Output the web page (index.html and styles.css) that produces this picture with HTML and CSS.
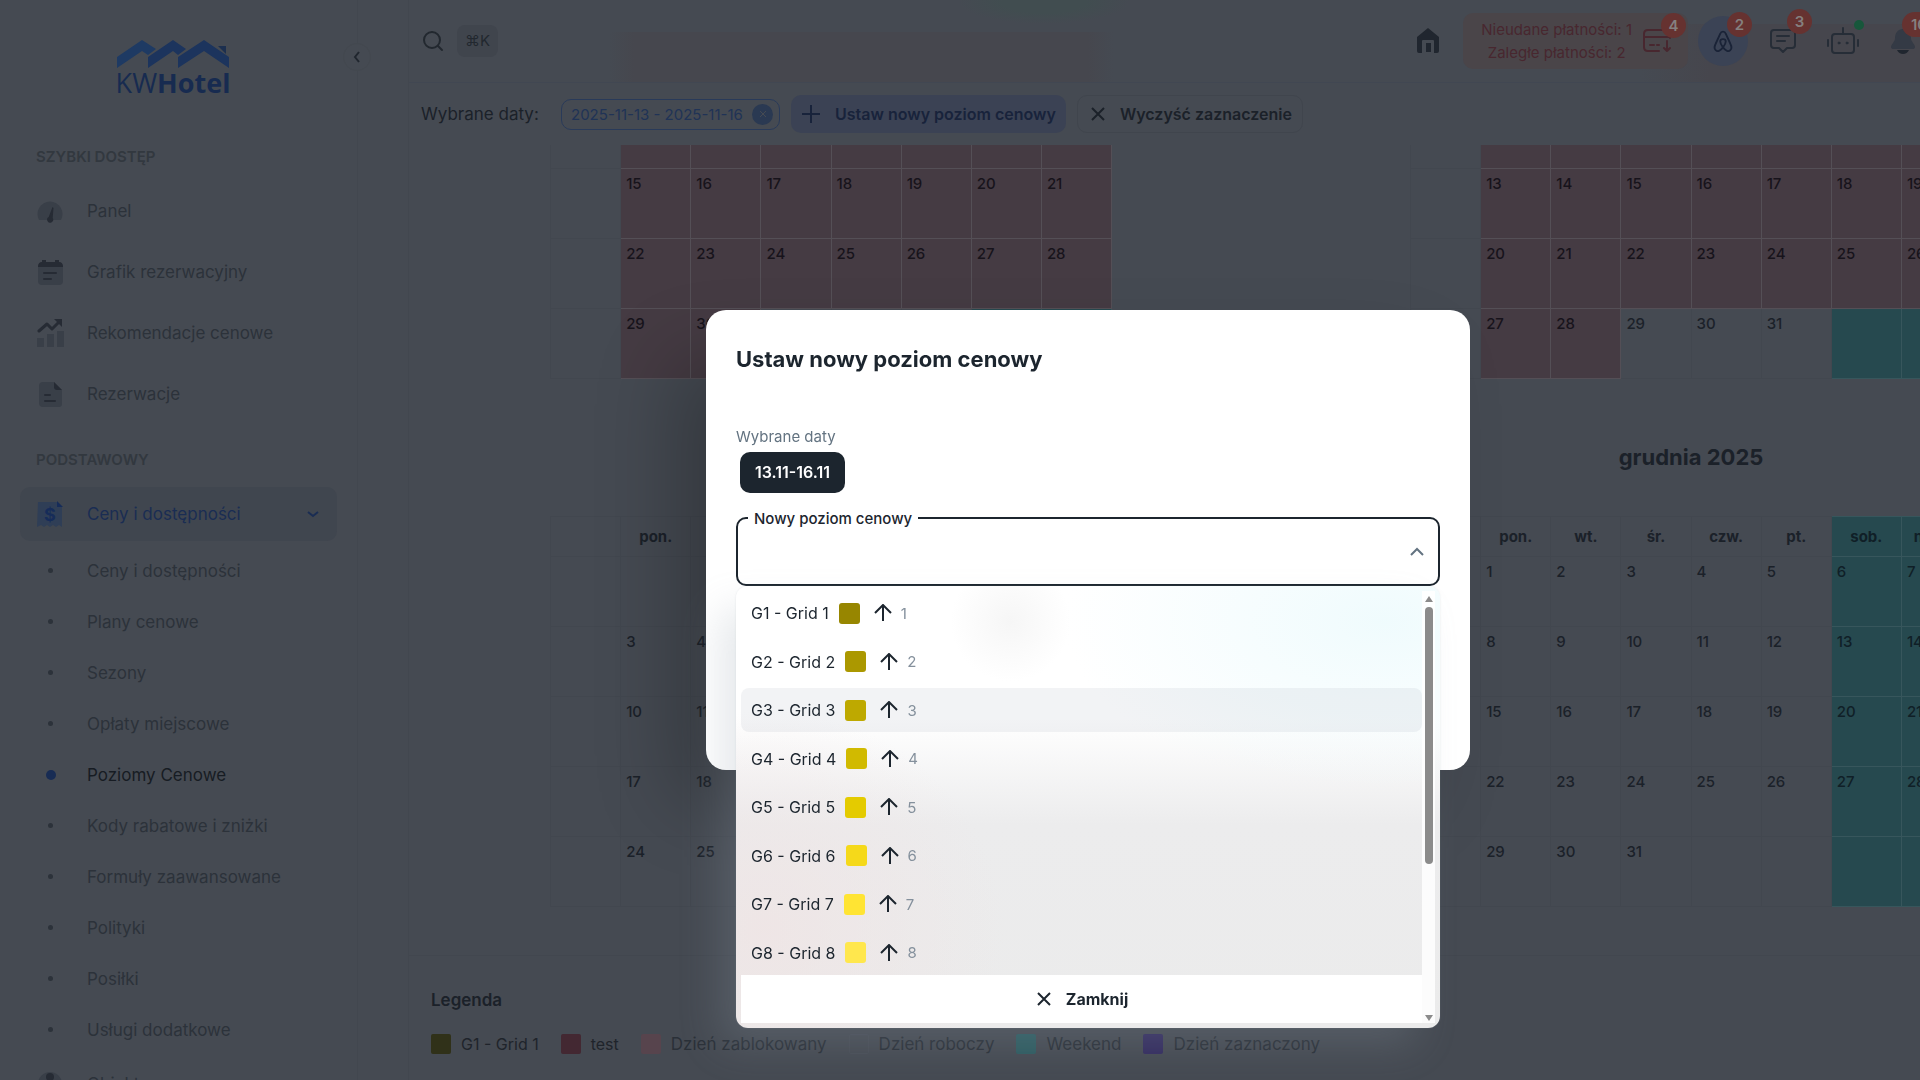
FILE: index.html
```html
<!DOCTYPE html>
<html lang="pl">
<head>
  <meta charset="UTF-8" />
  <meta name="viewport" content="width=device-width, initial-scale=1.0" />
  <title>KWHotel - Poziomy Cenowe</title>
  <link rel="stylesheet" href="styles.css">
</head>
<body>
  <div class="app">
    <aside class="sidebar">
      <a class="logo" href="#" aria-label="KWHotel">
        <svg width="112" height="29" viewBox="0 0 112 29">
          <path d="M0 28V17L25 0l14 9-8 6-6-4z" fill="#1e3a63"/>
          <path d="M31 28V17L56 0l13 9-8 6-5-4z" fill="#1c345d"/>
          <path d="M61 28V17L87 0l25 17v11L87 11z" fill="#1c345d"/>
          <path d="M101 6h8v8z" fill="#1c2f4f"/>
        </svg>
        <span class="logo-text">KW<b>Hotel</b></span>
      </a>
      <button class="collapse" aria-label="Zwiń menu">
        <svg width="16" height="16" viewBox="0 0 16 16" fill="none" stroke="currentColor" stroke-width="2"><path d="M10 3L6 8l4 5"/></svg>
      </button>

      <nav>
        <h2 class="nav-head">SZYBKI DOSTĘP</h2>
        <a class="nav-item" href="#">
          <svg class="nav-icon" viewBox="0 0 28 28"><path d="M3 23a12.500 12.500 0 1 1 22 0z" fill="#393f48"/><path d="M16.500 10l1 1-.8 10a3 3 0 1 1-4-1z" fill="#262b34"/></svg>
          Panel
        </a>
        <a class="nav-item" href="#">
          <svg class="nav-icon" viewBox="0 0 28 28"><rect x="2" y="5" width="25" height="22" rx="4" fill="#393f48"/><path d="M2 9q0-5 4-5V2h4v2h9V2h4v2q4 0 4 5z" fill="#262b34"/><path d="M8 15h12M8 21h7" stroke="#262b34" stroke-width="2" stroke-linecap="round"/></svg>
          Grafik rezerwacyjny
        </a>
        <a class="nav-item" href="#">
          <svg class="nav-icon" viewBox="0 0 28 28"><path d="M1 19h7v9H1zM11 15h7v13h-7zM21 12h7v16h-7z" fill="#393f48"/><path d="M3 12l8-7 5 5 8-8" fill="none" stroke="#262b34" stroke-width="3" stroke-linecap="round" stroke-linejoin="round"/><path d="M18 0h8v8z" fill="#262b34"/></svg>
          Rekomendacje cenowe
        </a>
        <a class="nav-item" href="#">
          <svg class="nav-icon" viewBox="0 0 28 28"><path d="M7 2h11l8 8v14q0 3-3 3H7q-4 0-4-4V6q0-4 4-4z" fill="#393f48"/><path d="M18 2l8 8h-5q-3 0-3-3z" fill="#262b34"/><path d="M9 15h5M9 21h10" stroke="#262b34" stroke-width="2" stroke-linecap="round"/></svg>
          Rezerwacje
        </a>

        <h2 class="nav-head nav-head-next">PODSTAWOWY</h2>
        <a class="nav-item active" href="#">
          <svg class="nav-icon" viewBox="0 0 28 28"><path d="M2 2h19l5 5v20l-3-2-3 2-3-2-3 2-3-2-3 2-3-2-4 2z" fill="#2f3e56"/><path d="M21 1l6 6h-6z" fill="#162c59"/><text x="14" y="21" text-anchor="middle" class="dollar">$</text></svg>
          Ceny i dostępności
          <svg class="nav-caret" width="16" height="16" viewBox="0 0 16 16" fill="none" stroke="currentColor" stroke-width="2"><path d="M3 6l5 4 5-4"/></svg>
        </a>
        <ul class="subnav">
          <li><a href="#">Ceny i dostępności</a></li>
          <li><a href="#">Plany cenowe</a></li>
          <li><a href="#">Sezony</a></li>
          <li><a href="#">Opłaty miejscowe</a></li>
          <li><a href="#" class="current">Poziomy Cenowe</a></li>
          <li><a href="#">Kody rabatowe i zniżki</a></li>
          <li><a href="#">Formuły zaawansowane</a></li>
          <li><a href="#">Polityki</a></li>
          <li><a href="#">Posiłki</a></li>
          <li><a href="#">Usługi dodatkowe</a></li>
        </ul>
        <a class="nav-item" href="#">
          <svg class="nav-icon" viewBox="0 0 28 28"><circle cx="14" cy="14" r="12" fill="#393f48"/><circle cx="14" cy="7" r="4" fill="#262b34"/></svg>
          Obiekt
        </a>
      </nav>
    </aside>

    <main class="main">
      <header class="topbar">
        <button class="search" aria-label="Szukaj">
          <svg width="24" height="24" viewBox="0 0 24 24" fill="none" stroke="currentColor" stroke-width="2" stroke-linecap="round"><circle cx="11" cy="11" r="8"/><path d="M17 17l4 4"/></svg>
          <kbd>⌘K</kbd>
        </button>
        <div class="top-actions">
          <button class="top-btn" aria-label="Start">
            <svg width="28" height="28" viewBox="0 0 28 28"><path d="M14 1L25 10v14q0 2-2 2h-3V14q0-1-1-1H9q-1 0-1 1v12H5q-2 0-2-2V10z" fill="#20262f"/><path d="M12 16h5v9h-5z" fill="#20262f"/></svg>
          </button>
          <button class="payments">
            <span>Nieudane płatności: 1<br>Zaległe płatności: 2</span>
            <svg width="30" height="28" viewBox="0 0 30 28" fill="none" stroke="currentColor" stroke-width="2" stroke-linecap="round" stroke-linejoin="round"><path d="M17 24H6q-4 0-4-4V7q0-4 4-4h18q4 0 4 4v4M2 10h26M8 18h4M15 18h2M25 14v10M22 21l3 3 3-3"/></svg>
            <i class="badge">4</i>
          </button>
          <button class="top-btn round" aria-label="Airbnb">
            <svg width="22" height="24" viewBox="0 0 24 26" fill="none" stroke="currentColor" stroke-width="2"><path d="M12 20C8 15 8 11 12 11s4 4 0 9c-3 4-6 5-8 3s-1-5 0-7l5-11c1-3 5-3 6 0l5 11c1 2 2 5 0 7s-5 1-8-3z"/></svg>
            <i class="badge">2</i>
          </button>
          <button class="top-btn" aria-label="Wiadomości">
            <svg width="28" height="28" viewBox="0 0 28 28" fill="none" stroke="currentColor" stroke-width="2" stroke-linecap="round" stroke-linejoin="round"><path d="M5 3h18q3 0 3 3v12q0 3-3 3h-5l-4 4-4-4H5q-3 0-3-3V6q0-3 3-3zM8 9h12M8 14h8"/></svg>
            <i class="badge high">3</i>
          </button>
          <button class="top-btn" aria-label="Asystent">
            <svg width="32" height="30" viewBox="0 0 32 30" fill="none" stroke="currentColor" stroke-width="2" stroke-linecap="round"><rect x="5" y="8" width="22" height="19" rx="3"/><path d="M16 8V2M1 14v6M31 14v6"/><circle cx="12" cy="17" r="1" fill="currentColor" stroke-width="1"/><circle cx="20" cy="17" r="1" fill="currentColor" stroke-width="1"/></svg>
            <i class="dot"></i>
          </button>
          <button class="top-btn" aria-label="Powiadomienia">
            <svg width="28" height="28" viewBox="0 0 28 28"><path d="M14 2c5 0 8 4 8 9 0 4 4 6 4 9q0 2-3 2H5q-3 0-3-2c0-3 4-5 4-9 0-5 3-9 8-9z" fill="#343a45"/><path d="M8 23h12q-2 4-6 4t-6-4z" fill="#20262f"/></svg>
            <i class="badge wide">10</i>
          </button>
        </div>
      </header>

      <section class="toolbar">
        <span class="toolbar-label">Wybrane daty:</span>
        <span class="date-chip">2025-11-13 - 2025-11-16
          <button aria-label="Usuń daty"><svg width="10" height="10" viewBox="0 0 10 10" stroke="#454a52" stroke-width="1"><path d="M2 2l6 6M8 2l-6 6"/></svg></button>
        </span>
        <button class="btn btn-primary">
          <svg width="20" height="20" viewBox="0 0 20 20" stroke="currentColor" stroke-width="2"><path d="M10 1v18M1 10h18"/></svg>
          Ustaw nowy poziom cenowy
        </button>
        <button class="btn btn-outline">
          <svg width="20" height="20" viewBox="0 0 20 20" stroke="currentColor" stroke-width="2"><path d="M4 4l12 12M16 4L4 16"/></svg>
          Wyczyść zaznaczenie
        </button>
      </section>

      <section class="calendar">
        <div class="months" id="months"></div>
      </section>

      <section class="legend">
        <h2>Legenda</h2>
        <ul>
          <li class="strong"><i class="sw sw-g1"></i>G1 - Grid 1</li>
          <li class="strong"><i class="sw sw-test"></i>test</li>
          <li><i class="sw sw-blocked"></i>Dzień zablokowany</li>
          <li><i class="sw sw-work"></i>Dzień roboczy</li>
          <li><i class="sw sw-weekend"></i>Weekend</li>
          <li><i class="sw sw-selected"></i>Dzień zaznaczony</li>
        </ul>
      </section>
    </main>
  </div>

  <div class="overlay">
    <div class="dialog" role="dialog" aria-labelledby="dialogTitle">
      <h1 id="dialogTitle">Ustaw nowy poziom cenowy</h1>
      <p class="caption">Wybrane daty</p>
      <span class="range">13.11-16.11</span>
      <div class="field">
        <label for="level">Nowy poziom cenowy</label>
        <select id="level"><option value=""></option></select>
        <svg class="field-caret" width="16" height="16" viewBox="0 0 16 16" fill="none" stroke="currentColor" stroke-width="2"><path d="M2 11l6-6 6 6"/></svg>
        <div class="menu">
          <div class="menu-body">
            <ul class="levels" id="levels" role="listbox" aria-label="Nowy poziom cenowy"></ul>
            <button class="close">
              <svg width="18" height="18" viewBox="0 0 18 18" stroke="currentColor" stroke-width="2"><path d="M3 3l12 12M15 3L3 15"/></svg>
              Zamknij
            </button>
          </div>
          <div class="scroll">
            <span class="arrow up"></span>
            <span class="thumb"></span>
            <span class="arrow down"></span>
          </div>
        </div>
      </div>
    </div>
  </div>

  <script>
    const dayNames = ["pon.", "wt.", "śr.", "czw.", "pt.", "sob.", "niedz."];

    // first = weekday of the 1st (0 = Monday), blockedTo = last blocked day
    const months = [
      { name: "września 2025", first: 0, days: 30, blockedTo: 30 },
      { name: "października 2025", first: 2, days: 31, blockedTo: 28 },
      { name: "listopada 2025", first: 5, days: 30, blockedTo: 0 },
      { name: "grudnia 2025", first: 0, days: 31, blockedTo: 0 }
    ];

    function renderMonth(m) {
      let rows = "";
      for (let w = 0; w < 5; w++) {
        rows += "<tr><td></td>";
        for (let d = 0; d < 7; d++) {
          const day = w * 7 + d - m.first + 1;
          const inMonth = day > 0 && day <= m.days;
          const blocked = inMonth && day <= m.blockedTo;
          const cls = blocked ? "blocked" : d > 4 ? "weekend" : "";
          rows += `<td class="${cls}">${inMonth ? day : ""}</td>`;
        }
        rows += "</tr>";
      }
      const head = dayNames.map((n, i) => `<th class="${i > 4 ? 'weekend' : ''}">${n}</th>`).join("");
      return `<div class="month"><h2>${m.name}</h2><table><thead><tr><th></th>${head}</tr></thead><tbody>${rows}</tbody></table></div>`;
    }

    document.getElementById("months").innerHTML = months.map(renderMonth).join("");

    const colors = ["#978600", "#ab9800", "#bea900", "#d1ba00", "#e4cb00", "#f5d91a", "#ffe433", "#ffe74d"];
    document.getElementById("levels").innerHTML = colors.map((c, i) => `
      <li role="option" class="${i === 2 ? 'hover' : ''}">
        G${i + 1} - Grid ${i + 1}
        <i class="level-color" style="background:${c}"></i>
        <svg width="18" height="18" viewBox="0 0 18 18" fill="none" stroke="currentColor" stroke-width="2"><path d="M9 17V2M1 9l8-8 8 8"/></svg>
        <small>${i + 1}</small>
      </li>`).join("");
  </script>
</body>
</html>
```

FILE: styles.css
```css
* {
  box-sizing: border-box;
}
body {
  margin: 0;
  height: 100vh;
  overflow: hidden;
  background: #454a52;
  color: #1b2129;
  font-family: Inter, "Liberation Sans", sans-serif;
  font-size: 17px;
}
button, select {
  font: inherit;
  color: inherit;
  border: 0;
  padding: 0;
  background: none;
}
a {
  color: inherit;
  text-decoration: none;
}
ul {
  list-style: none;
  margin: 0;
  padding: 0;
}
i {
  font-style: normal;
}
.app {
  display: flex;
  height: 100vh;
}

/* sidebar */
.sidebar {
  position: relative;
  flex: 0 0 358px;
  padding: 0 20px;
  border-right: 1px solid #42474f;
  color: #2c323a;
}
.logo {
  display: flex;
  flex-direction: column;
  align-items: center;
  height: 130px;
  padding: 40px 11px 0 0;
}
.logo-text {
  font-family: "Open Sans", sans-serif;
  font-size: 27px;
  line-height: 28px;
  color: #172b50;
}
.collapse {
  position: absolute;
  top: 43px;
  right: -14px;
  width: 28px;
  height: 28px;
  border: 1px solid #43484f;
  border-radius: 50%;
  color: #20262e;
  background: #454a52;
}
.collapse svg {
  display: block;
  margin: auto;
}
.nav-head {
  margin: 0;
  padding-left: 16px;
  font-size: 15px;
  font-weight: 600;
  line-height: 54px;
  color: #32383f;
}
.nav-head-next {
  margin-top: 12px;
}
.nav-item {
  display: flex;
  align-items: center;
  height: 54px;
  margin-bottom: 7px;
  padding: 0 16px;
  border-radius: 10px;
}
.nav-icon {
  width: 28px;
  height: 28px;
  margin-right: 23px;
}
.nav-item.active {
  margin-bottom: 4px;
  background: #40464f;
  color: #1a2d53;
}
.dollar {
  font-size: 18px;
  font-weight: 700;
  fill: #162c59;
}
.nav-caret {
  margin-left: auto;
}
.subnav {
  margin-bottom: 2px;
}
.subnav a {
  display: flex;
  align-items: center;
  height: 51px;
  padding-left: 28px;
}
.subnav a::before {
  content: "";
  width: 5px;
  height: 5px;
  margin-right: 34px;
  border-radius: 50%;
  background: #2c323a;
}
.subnav .current {
  padding-left: 26px;
  color: #171c23;
}
.subnav .current::before {
  width: 10px;
  height: 10px;
  margin-right: 31px;
  background: #182c54;
}

/* top bar */
.main {
  flex: 1;
  min-width: 0;
  margin-left: 50px;
  border-left: 1px solid #42474f;
  display: flex;
  flex-direction: column;
}
.topbar {
  flex: 0 0 83px;
  display: flex;
  align-items: center;
  justify-content: space-between;
  padding-left: 12px;
  border-bottom: 1px solid #414752;
  background:
    radial-gradient(closest-side, #414d50 50%, transparent) 550px -20px / 170px 44px no-repeat,
    linear-gradient(90deg, transparent, #46474e 5%, #46474e 95%, transparent) 200px 32px / 504px 51px no-repeat,
    linear-gradient(90deg, transparent, #46464d 25%) right 24px / 280px 59px no-repeat;
}
.search {
  display: flex;
  align-items: center;
  gap: 12px;
  color: #22282f;
}
kbd {
  padding: 0 8px;
  border-radius: 8px;
  background: #40454d;
  font-family: inherit;
  font-size: 15px;
  line-height: 32px;
}
.top-actions {
  display: flex;
  align-items: center;
  gap: 10px;
  margin-right: -8px;
}
.top-btn {
  position: relative;
  flex: none;
  width: 50px;
  height: 50px;
  color: #262d37;
}
.top-btn svg {
  display: block;
  margin: auto;
}
.round {
  border-radius: 50%;
  background: #3b4355;
  color: #1a2337;
}
.payments {
  position: relative;
  display: flex;
  align-items: center;
  gap: 10px;
  height: 56px;
  padding: 0 16px 0 18px;
  border-radius: 10px;
  background: #4a4549;
  color: #48272f;
  font-size: 15px;
  line-height: 23px;
}
.badge {
  position: absolute;
  top: -4px;
  right: -4px;
  width: 25px;
  height: 25px;
  border-radius: 13px;
  background: #663230;
  color: #85807f;
  font-size: 15px;
  font-weight: 600;
  line-height: 25px;
  text-align: center;
}
.payments .badge {
  top: 0;
  right: 2px;
}
.badge.high {
  top: -7px;
}
.badge.wide {
  right: -8px;
  width: 34px;
}
.dot {
  position: absolute;
  top: 4px;
  right: 4px;
  width: 10px;
  height: 10px;
  border-radius: 50%;
  background: #17573b;
}

/* toolbar */
.toolbar {
  flex: 0 0 62px;
  display: flex;
  align-items: center;
  gap: 11px;
  padding-left: 12px;
}
.toolbar-label {
  width: 129px;
}
.date-chip {
  display: flex;
  align-items: center;
  justify-content: space-between;
  width: 219px;
  height: 31px;
  padding: 0 6px 0 9px;
  border: 1px solid #293a59;
  border-radius: 10px;
  color: #203356;
  font-size: 15px;
  white-space: nowrap;
}
.date-chip button {
  width: 21px;
  height: 21px;
  border-radius: 50%;
  background: #2a3952;
}
.date-chip svg {
  display: block;
  margin: auto;
}
.btn {
  display: flex;
  align-items: center;
  gap: 14px;
  height: 38px;
  padding: 0 10px;
  border-radius: 10px;
  font-size: 16px;
  font-weight: 600;
}
.btn-primary {
  background: #3b4254;
  color: #18233b;
}
.btn-outline {
  gap: 12px;
  border: 1px solid #40454d;
}

/* calendar */
.calendar {
  flex: 1;
  min-height: 0;
  overflow: hidden;
}
/* scrolled down to the second week of the first months */
.months {
  display: grid;
  grid-template-columns: 562px 562px;
  gap: 38px 298px;
  margin: -256px 0 0 141px;
}
.month h2 {
  margin: 0;
  font-size: 22px;
  font-weight: 700;
  line-height: 80px;
  height: 99px;
  text-align: center;
}
table {
  width: 100%;
  table-layout: fixed;
  border-collapse: collapse;
}
th, td {
  border: 1px solid #42474f;
}
th {
  height: 40px;
  padding: 0;
  font-size: 15px;
}
td {
  height: 70px;
  padding: 5px;
  font-size: 15px;
  font-weight: 500;
  line-height: 20px;
  vertical-align: top;
}
.blocked {
  background: #453b43;
  border-color: #544f56;
  color: #17131b;
}
.weekend {
  background: #26494f;
  border-color: #37565c;
  color: #101f27;
}

/* legend */
.legend {
  flex: 0 0 125px;
  padding: 34px 22px 0;
  border-top: 1px solid #42474f;
}
.legend h2 {
  margin: 0 0 24px;
  font-size: 17px;
  font-weight: 600;
  line-height: 20px;
}
.legend ul {
  display: flex;
  gap: 22px;
}
.legend li {
  display: flex;
  align-items: center;
  gap: 10px;
  color: #2a3038;
}
.legend .strong {
  color: #1f242b;
  font-size: 16px;
}
.sw {
  width: 20px;
  height: 20px;
  border-radius: 2px;
}
.sw-g1 { background: #303119; }
.sw-test { background: #432832; }
.sw-blocked { background: #57444d; }
.sw-work { border: 1px solid #484d56; }
.sw-weekend { background: #2e5b60; }
.sw-selected { background: #332c5e; }

/* dialog */
.overlay {
  position: fixed;
  inset: 0;
  display: flex;
  align-items: center;
  justify-content: center;
  padding-left: 256px;
}
.dialog {
  width: 764px;
  height: 460px;
  padding: 30px;
  border-radius: 20px;
  background: #fff;
  color: #1c252e;
  box-shadow: -40px 40px 80px -8px rgba(0, 0, 0, 0.24);
}
.dialog h1 {
  margin: 0 0 48px;
  font-size: 22px;
  font-weight: 700;
  line-height: 38px;
}
.caption {
  margin: 0 0 5px;
  font-size: 15px;
  line-height: 21px;
  color: #637381;
}
.range {
  display: inline-block;
  margin-left: 4px;
  padding: 0 15px;
  border-radius: 10px;
  background: #1c252e;
  color: #fff;
  font-size: 16px;
  font-weight: 600;
  line-height: 41px;
}
.field {
  position: relative;
  margin-top: 24px;
  height: 69px;
}
.field select {
  appearance: none;
  display: block;
  width: 100%;
  height: 69px;
  border: 2px solid #1c252e;
  border-radius: 10px;
  outline: 0;
}
.field label {
  position: absolute;
  top: -8px;
  left: 12px;
  padding: 0 6px;
  background: #fff;
  font-size: 15px;
  font-weight: 500;
  line-height: 20px;
}
.field-caret {
  position: absolute;
  top: 27px;
  right: 15px;
  color: #637381;
}

/* open list */
.menu {
  position: absolute;
  top: 100%;
  left: 0;
  width: 100%;
  display: flex;
  padding: 5px;
  border-radius: 12px;
  background:
    radial-gradient(ellipse 320px 170px at 92% 8%, rgba(238, 251, 253, 0.9), transparent),
    radial-gradient(ellipse 60px 60px at 39% 8%, rgba(246, 246, 246, 1), transparent),
    radial-gradient(ellipse 240px 220px at 4% 78%, rgba(239, 228, 228, 0.8), transparent),
    linear-gradient(#fff 30%, #ececed 54%, #ebebeb);
  box-shadow: 0 0 2px rgba(145, 158, 171, 0.24), -20px 20px 40px -4px rgba(145, 158, 171, 0.24);
}
.menu-body {
  flex: 1;
}
.levels {
  display: flex;
  flex-direction: column;
  justify-content: space-between;
  height: 384px;
}
.levels li {
  display: flex;
  align-items: center;
  height: 44px;
  padding: 0 10px;
  border-radius: 8px;
  font-size: 16px;
}
.levels .hover {
  background: rgba(145, 158, 171, 0.12);
}
.level-color {
  width: 21px;
  height: 21px;
  margin: 0 14px 0 10px;
  border-radius: 3px;
}
.levels small {
  margin-left: 9px;
  font-size: 15px;
  color: #84909c;
}
.close {
  display: flex;
  align-items: center;
  justify-content: center;
  gap: 13px;
  width: 100%;
  height: 48px;
  background: #fff;
  font-size: 16px;
  font-weight: 700;
}
.scroll {
  flex: 0 0 13px;
  display: flex;
  flex-direction: column;
  align-items: center;
  padding: 5px 0 2px;
  background: rgba(255, 255, 255, 0.85);
}
.arrow {
  border: 4px solid transparent;
}
.up {
  border-bottom: 6px solid #8b8b8b;
  border-top: 0;
}
.down {
  margin-top: auto;
  border-top: 6px solid #8b8b8b;
  border-bottom: 0;
}
.thumb {
  width: 8px;
  height: 257px;
  margin-top: 5px;
  border-radius: 4px;
  background: #8b8b8b;
}
```
